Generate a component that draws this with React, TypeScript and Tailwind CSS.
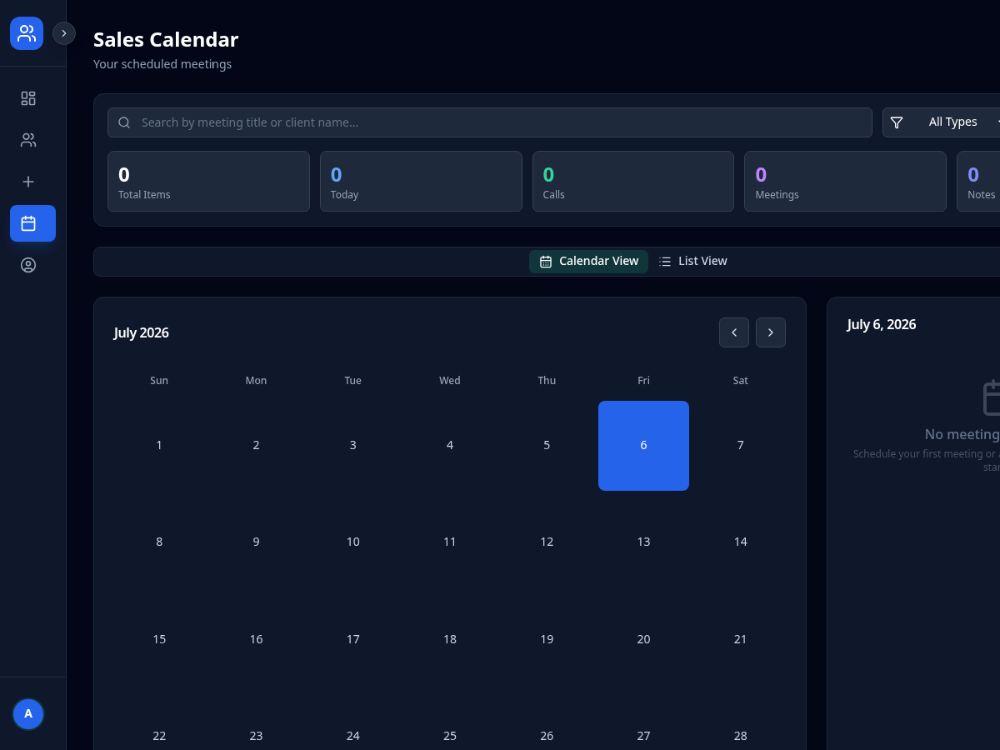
import React from 'react';
import { clsx } from 'clsx';
import {
    Calendar,
    CalendarDays,
    ChevronDown,
    ChevronLeft,
    ChevronRight,
    CircleUser,
    Filter,
    LayoutDashboard,
    List,
    Plus,
    Search,
    Users,
} from 'lucide-react';
import type { LucideIcon } from 'lucide-react';

interface NavItem {
    name: string;
    icon: LucideIcon;
}

interface Stat {
    label: string;
    value: number;
    color: string;
}

const navItems: NavItem[] = [
    { name: 'dashboard', icon: LayoutDashboard },
    { name: 'clients', icon: Users },
    { name: 'add', icon: Plus },
    { name: 'calendar', icon: Calendar },
    { name: 'profile', icon: CircleUser },
];

const stats: Stat[] = [
    { label: 'Total Items', value: 0, color: 'text-white' },
    { label: 'Today', value: 0, color: 'text-[#60a5fa]' },
    { label: 'Calls', value: 0, color: 'text-[#34d399]' },
    { label: 'Meetings', value: 0, color: 'text-[#c084fc]' },
    { label: 'Notes', value: 0, color: 'text-[#818cf8]' },
];

const weekDays = ['Sun', 'Mon', 'Tue', 'Wed', 'Thu', 'Fri', 'Sat'];
const days = Array.from({ length: 28 }, (_, i) => i + 1);

const Sidebar: React.FC = () => (
    <aside className="relative flex w-20 shrink-0 flex-col border-r border-[#1e293b] bg-[#0f172a]">
        <div className="flex h-20 shrink-0 items-center border-b border-[#1e293b] px-3">
            <div className="flex size-10 items-center justify-center rounded-xl bg-[#2563eb]">
                <Users className="size-6 text-white" />
            </div>
        </div>
        <button className="absolute top-[26px] -right-3 z-10 flex size-7 items-center justify-center rounded-full border border-[#334155] bg-[#1e293b] text-[#cbd5e1] shadow-lg">
            <ChevronRight className="size-3.5" />
        </button>

        <nav className="flex flex-1 flex-col gap-1.5 px-3 py-4">
            {navItems.map(({ name, icon: Icon }) => (
                <button
                    key={name}
                    aria-label={name}
                    className={clsx(
                        'flex h-11 items-center rounded-lg px-3',
                        name === 'calendar'
                            ? 'bg-[#2563eb] text-white shadow-lg shadow-[#2563eb]/20'
                            : 'text-[#94a3b8]'
                    )}
                >
                    <Icon className="size-5" />
                </button>
            ))}
        </nav>

        <div className="flex h-[88px] shrink-0 items-center border-t border-[#1e293b] px-4">
            <div className="flex size-9 items-center justify-center rounded-full bg-[#2563eb] pb-0.5 text-sm font-bold text-white ring-2 ring-[#10b981]/20">
                A
            </div>
        </div>
    </aside>
);

const Filters: React.FC = () => (
    <section className="shrink-0 rounded-xl border border-[#1e293b] bg-[#0f172a] p-4 shadow-sm">
        <div className="flex gap-3">
            <div className="relative w-[918px]">
                <Search className="absolute top-2.5 left-3 size-4 text-[#94a3b8]" />
                <input
                    type="text"
                    placeholder="Search by meeting title or client name..."
                    className="block h-9 w-full rounded-md border border-[#334155] bg-[#1e293b] pr-3 pb-0.5 pl-10 text-sm text-white placeholder-[#64748b]"
                />
            </div>
            <button className="flex h-9 flex-1 items-center rounded-md border border-[#334155] bg-[#1e293b] px-2 text-sm text-white">
                <Filter className="size-4" />
                <span className="ml-[31px] pb-0.5">All Types</span>
                <ChevronDown className="ml-[22px] size-4" />
            </button>
        </div>

        <div className="mt-4 grid grid-cols-5 gap-3">
            {stats.map((stat) => (
                <div key={stat.label} className="rounded-lg border border-[#334155] bg-[#1e293b] p-3">
                    <p className={clsx('-mt-px mb-px text-2xl font-bold', stat.color)}>{stat.value}</p>
                    <p className="text-xs text-[#94a3b8]">{stat.label}</p>
                </div>
            ))}
        </div>
    </section>
);

const ViewTabs: React.FC = () => (
    <div className="flex h-9 shrink-0 items-center justify-center rounded-lg border border-[#1e293b] bg-[#0f172a] text-sm font-medium">
        <button className="flex h-7 items-center gap-2 rounded-md bg-[#10353b] px-3 text-white">
            <CalendarDays className="size-4" />
            <span className="pb-0.5">Calendar View</span>
        </button>
        <button className="flex h-7 items-center gap-2 rounded-md px-3 text-[#cbd5e1]">
            <List className="size-4" />
            <span className="pb-0.5">List View</span>
        </button>
    </div>
);

const MonthCalendar: React.FC = () => (
    <section className="col-span-2 rounded-xl border border-[#1e293b] bg-[#0f172a] p-6">
        <div className="flex items-center justify-between">
            <h2 className="text-base leading-none font-semibold tracking-tight text-white">July 2026</h2>
            <div className="flex gap-2">
                <button className="flex size-9 items-center justify-center rounded-md border border-[#334155] bg-[#1e293b] text-[#e2e8f0]">
                    <ChevronLeft className="size-4" />
                </button>
                <button className="flex size-9 items-center justify-center rounded-md border border-[#334155] bg-[#1e293b] text-[#e2e8f0]">
                    <ChevronRight className="size-4" />
                </button>
            </div>
        </div>

        <div className="mt-6 mb-2 grid grid-cols-7 gap-2">
            {weekDays.map((day) => (
                <div key={day} className="py-2 text-center text-xs font-medium text-[#94a3b8]">
                    {day}
                </div>
            ))}
        </div>
        <div className="grid grid-cols-7 gap-2">
            {days.map((day) => (
                <button
                    key={day}
                    className={clsx(
                        'flex aspect-square items-center justify-center rounded-lg pb-0.5 text-sm',
                        day === 6 ? 'bg-[#2563eb] text-white' : 'text-[#cbd5e1]'
                    )}
                >
                    {day}
                </button>
            ))}
        </div>
    </section>
);

const DayPanel: React.FC = () => (
    <section className="rounded-xl border border-[#1e293b] bg-[#0f172a] p-6">
        <h2 className="text-base leading-none font-semibold tracking-tight text-white">July 6, 2026</h2>
        <div className="mt-6 flex flex-col items-center py-8 text-center">
            <Calendar className="mb-2 size-12 text-[#3a4659]" />
            <p className="text-base font-medium text-[#64748b]">No meetings scheduled</p>
            <p className="mt-1 text-xs whitespace-nowrap text-[#475569]">
                Schedule your first meeting or add a client note to a day to get
                <br />
                started
            </p>
        </div>
    </section>
);

const App: React.FC = () => {
    return (
        <div className="h-screen w-screen overflow-hidden bg-[#020617]">
            <div className="flex h-[900px] w-[1440px] origin-top-left scale-[0.83333] overflow-hidden bg-[#020617] font-['Noto_Sans',sans-serif] will-change-transform">
                <Sidebar />
                <main className="flex min-w-0 flex-1 flex-col gap-6 p-8">
                    <header className="-mt-px mb-px shrink-0">
                        <h1 className="text-2xl font-bold text-white">Sales Calendar</h1>
                        <p className="mt-1 text-sm text-[#94a3b8]">Your scheduled meetings</p>
                    </header>
                    <Filters />
                    <ViewTabs />
                    <div className="grid grid-cols-3 gap-6">
                        <MonthCalendar />
                        <DayPanel />
                    </div>
                </main>
            </div>
        </div>
    );
};

export default App;
